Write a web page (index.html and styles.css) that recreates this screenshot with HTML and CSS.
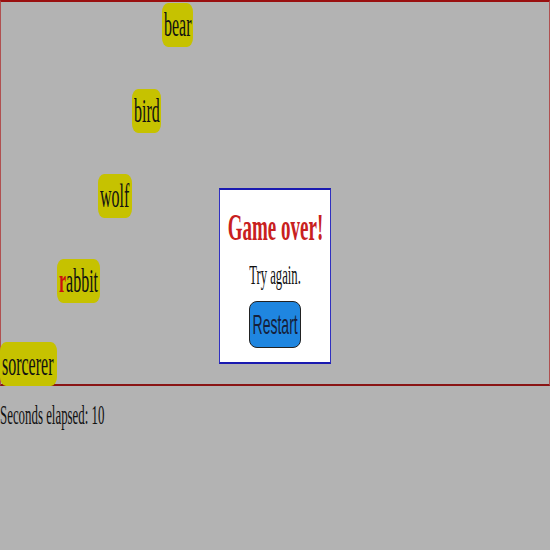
FILE: index.html
```html
<!DOCTYPE html>
<html>
<head>
<meta charset="utf-8">
<link rel="stylesheet" href="styles.css">
</head>
<body>
<div class="game">
  <div class="word w-bear"><span class="sq">bear</span></div>
  <div class="word w-bird"><span class="sq">bird</span></div>
  <div class="word w-wolf"><span class="sq">wolf</span></div>
  <div class="word w-rabbit"><span class="sq"><span class="typed">r</span>abbit</span></div>
  <div class="word w-sorcerer"><span class="sq">sorcerer</span></div>
  <div class="modal">
    <div class="title"><span class="sqc">Game over!</span></div>
    <div class="retry"><span class="sqc">Try again.</span></div>
    <button class="restart"><span class="sqc">Restart</span></button>
  </div>
</div>
<div class="elapsed"><span class="sq">Seconds elapsed: 10</span></div>
</body>
</html>
```

FILE: styles.css
```css
html, body {
  margin: 0;
  padding: 0;
  background: #b3b3b3;
  font-family: "Liberation Serif", "Times New Roman", serif;
  color: #111;
}
.game {
  position: relative;
  height: 382px;
  border-top: 2px solid #9a1010;
  border-bottom: 2px solid #8a1515;
  border-left: 1px solid #b05050;
  border-right: 1px solid #b05050;
}
.sq {
  display: inline-block;
  transform: scaleX(0.47);
  transform-origin: left center;
  white-space: nowrap;
}
.sqc {
  display: inline-block;
  transform: scaleX(0.5);
  transform-origin: center center;
  white-space: nowrap;
}
.word {
  position: absolute;
  height: 44px;
  line-height: 44px;
  font-size: 34px;
  background: #c6c200;
  border-radius: 6px / 9px;
  padding-left: 2px;
  box-sizing: border-box;
  overflow: visible;
}
.typed {
  color: #cc1010;
  font-weight: bold;
}
.w-bear { left: 161px; top: 1px; width: 31px; }
.w-bird { left: 131px; top: 87px; width: 29px; }
.w-wolf { left: 97px; top: 172px; width: 34px; }
.w-rabbit { left: 56px; top: 257px; width: 43px; }
.w-sorcerer { left: -1px; top: 340px; width: 57px; }
.modal {
  position: absolute;
  left: 218px;
  top: 186px;
  width: 110px;
  height: 154px;
  background: #ffffff;
  border-top: 2px solid #1a1ab0;
  border-bottom: 2px solid #1a1ab0;
  border-left: 1px solid #3030c0;
  border-right: 1px solid #3030c0;
  display: flex;
  flex-direction: column;
  align-items: center;
  padding-top: 18px;
  box-sizing: content-box;
}
.title {
  font-size: 38px;
  line-height: 38px;
  font-weight: bold;
  color: #c82020;
}
.retry {
  margin-top: 16px;
  font-size: 27px;
  line-height: 27px;
  color: #111;
}
.retry .sqc { transform: scaleX(0.47); }
.restart {
  margin-top: 12px;
  width: 52px;
  height: 47px;
  padding: 0;
  border: 1px solid #222;
  border-radius: 8px;
  background: #1f86e0;
  color: #15203a;
  font-family: "Liberation Sans", Arial, sans-serif;
  font-size: 28px;
  line-height: 45px;
  display: flex;
  align-items: center;
  justify-content: center;
  overflow: visible;
}
.elapsed {
  margin-top: 14px;
  font-size: 28px;
  line-height: 30px;
  color: #111;
}
.elapsed .sq { transform: scaleX(0.46); }
```
